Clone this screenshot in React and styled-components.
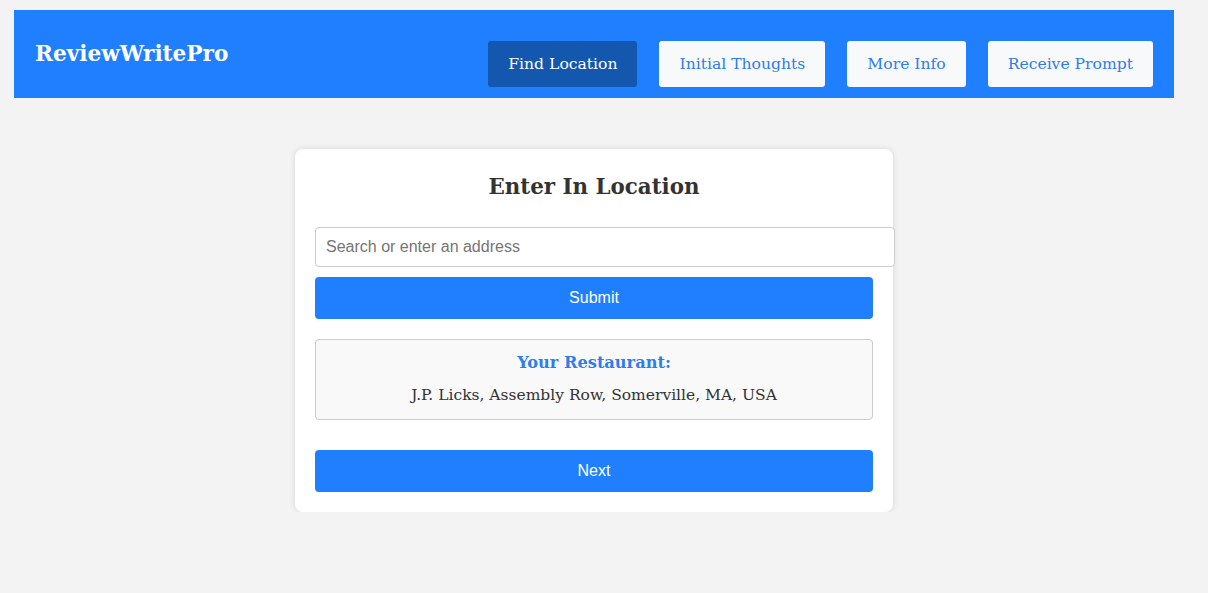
import styled, { createGlobalStyle } from "styled-components"

const Global = createGlobalStyle`
    body {
        margin: 0;
        background: #f3f3f3;
        font-family: "DejaVu Serif", "Liberation Serif", serif;
    }
`

const Page = styled.div`
    padding: 10px 34px 0 14px;
`

const Header = styled.header`
    height: 88px;
    box-sizing: border-box;
    background: #1f7fff;
    display: flex;
    justify-content: space-between;
    align-items: flex-start;
    padding: 31px 21px 0 21px;
`

const Logo = styled.h1`
    margin: 0;
    font-size: 21.6px;
    line-height: 26px;
    font-weight: 700;
    color: #fff;
`

const Nav = styled.nav`
    display: flex;
    gap: 22px;
`

const NavButton = styled.button`
    height: 46px;
    padding: 0 20px;
    border: none;
    border-radius: 3px;
    font-family: inherit;
    font-size: 15.6px;
    background: ${p => (p.$active ? "#1357ae" : "#f8f9fa")};
    color: ${p => (p.$active ? "#fff" : "#2f7cf0")};
    cursor: pointer;
`

const Main = styled.main`
    display: flex;
    justify-content: center;
    padding-top: 51px;
`

const Card = styled.div`
    width: 598px;
    box-sizing: border-box;
    background: #fff;
    border-radius: 8px;
    box-shadow: 0 0 6px rgba(0, 0, 0, 0.12);
    padding: 20px;
`

const Title = styled.h2`
    margin: 0 0 22px;
    text-align: center;
    font-size: 21.4px;
    line-height: 36px;
    font-weight: 700;
    color: #333;
`

const Input = styled.input`
    display: block;
    width: 100%;
    height: 38px;
    padding: 0 10px;
    border: 1px solid #ccc;
    border-radius: 4px;
    font-family: "Liberation Sans", Arial, sans-serif;
    font-size: 16px;
    color: #333;
    &::placeholder {
        color: #757575;
    }
`

const BlueButton = styled.button`
    display: block;
    width: 100%;
    height: 42px;
    margin-top: ${p => p.$top}px;
    border: none;
    border-radius: 4px;
    background: #1f7fff;
    color: #fff;
    font-family: "Liberation Sans", Arial, sans-serif;
    font-size: 16px;
    cursor: pointer;
`

const ResultBox = styled.div`
    margin-top: 20px;
    height: 81px;
    box-sizing: border-box;
    border: 1px solid #ccc;
    border-radius: 4px;
    background: #f9f9f9;
    text-align: center;
    padding-top: 11px;
`

const ResultTitle = styled.div`
    font-size: 16.2px;
    font-weight: 700;
    line-height: 24px;
    color: #2f7cf0;
`

const ResultText = styled.div`
    margin-top: 9px;
    font-size: 15.5px;
    line-height: 22px;
    color: #333;
`

export default function App() {
    return (
        <>
            <Global />
            <Page>
                <Header>
                    <Logo>ReviewWritePro</Logo>
                    <Nav>
                        <NavButton $active>Find Location</NavButton>
                        <NavButton>Initial Thoughts</NavButton>
                        <NavButton>More Info</NavButton>
                        <NavButton>Receive Prompt</NavButton>
                    </Nav>
                </Header>
                <Main>
                    <Card>
                        <Title>Enter In Location</Title>
                        <Input placeholder="Search or enter an address" />
                        <BlueButton $top={10}>Submit</BlueButton>
                        <ResultBox>
                            <ResultTitle>Your Restaurant:</ResultTitle>
                            <ResultText>J.P. Licks, Assembly Row, Somerville, MA, USA</ResultText>
                        </ResultBox>
                        <BlueButton $top={30}>Next</BlueButton>
                    </Card>
                </Main>
            </Page>
        </>
    )
}
